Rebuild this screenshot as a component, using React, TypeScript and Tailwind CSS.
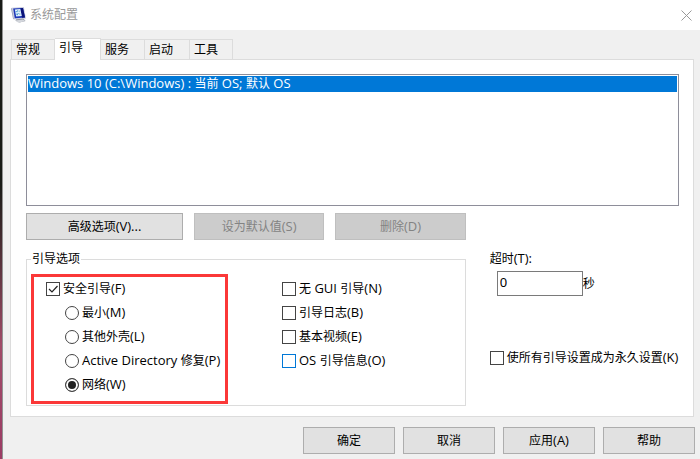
import { useState } from "react";
import type { ReactNode } from "react";

const tabs = [
  { label: "常规", width: "w-11" },
  { label: "引导", width: "w-[46px]" },
  { label: "服务", width: "w-11" },
  { label: "启动", width: "w-[45px]" },
  { label: "工具", width: "w-[43px]" },
];

const bootModes = ["最小(M)", "其他外壳(L)", "Active Directory 修复(P)", "网络(W)"];

// Latin runs are set one size larger than the Chinese text around them.
function Mixed({ text }: { text: string }) {
  return (
    <span className="whitespace-pre">
      {text.split(/([\x20-\x7e]+)/).map((run, i) =>
        i % 2 ? <span key={i} className="font-['Open_Sans',sans-serif] text-[13px] leading-none">{run}</span> : run,
      )}
    </span>
  );
}

function SystemIcon() {
  return (
    <svg width="16" height="16" viewBox="0 0 16 16" aria-hidden="true">
      <path d="M6 11h6l2.500 3-6 1.500-4-2z" fill="#8f949e" />
      <path d="M4 13.500l8-1 2.500 1.500-7 1.800z" fill="#d3d6dc" />
      <path d="M1 .8L12.800 0 15 11.500l-12 1z" fill="#c6c9dc" />
      <path d="M2.200 1.600L12 1l2 9.500-10.200.8z" fill="#1a35b8" />
      <path d="M9.500 1.200L12 1l2 9.500-3 .2z" fill="#0b1478" />
      <path d="M3.800 2.500l5.500-.4 1.500 6.900-5.600.4z" fill="#dff1fb" />
      <path d="M4.800 4.200l.9.900 1-1.700M5.300 7l1 .8 1-1.700" fill="none" stroke="#2a86c8" />
      <path d="M7.500 4.200h1.500M8 7h1.500" stroke="#7fb2d4" />
      <path d="M0 1.800l1-1 2 11.700-1-.7z" fill="#9ba3bf" />
    </svg>
  );
}

function Check({ label, checked = false, accent = false }: { label: string; checked?: boolean; accent?: boolean }) {
  const [on, setOn] = useState(checked);
  return (
    <label className="flex h-6 items-center gap-[3px] whitespace-nowrap">
      <span className="relative flex size-[14px] shrink-0">
        <input
          type="checkbox"
          checked={on}
          onChange={() => setOn(!on)}
          className={`size-[14px] appearance-none border bg-white ${accent ? "border-[#0078d7]" : "border-[#444444]"}`}
        />
        {on && (
          <svg className="pointer-events-none absolute inset-0" width="14" height="14" viewBox="0 0 14 14">
            <path d="M3 7l3 3 5.500-6" fill="none" stroke="#222" strokeWidth="1.200" />
          </svg>
        )}
      </span>
      <Mixed text={label} />
    </label>
  );
}

function PushButton({ children, className = "", disabled = false }: { children: ReactNode; className?: string; disabled?: boolean }) {
  return (
    <button
      type="button"
      disabled={disabled}
      className={`h-[27px] border text-center whitespace-nowrap ${
        disabled ? "border-[#bfbfbf] bg-[#cccccc] text-[#838383]" : "border-[#adadad] bg-[#e1e1e1]"
      } ${className}`}
    >
      {children}
    </button>
  );
}

export default function App() {
  const [mode, setMode] = useState(3);
  return (
    <div className="flex min-h-screen bg-[#f0f0f0] font-['Noto_Sans','Noto_Sans_CJK_SC',sans-serif] text-[12px] leading-4 text-black">
      <div className="w-[3px] shrink-0 border-r border-[#929292] bg-linear-to-b from-[#191b17] from-40% via-[#a04b68] via-75% to-[#9b3c65]" />
      <div className="flex min-w-0 flex-1 flex-col">
        <header className="flex h-[30px] items-center bg-white pr-2 pl-2">
          <SystemIcon />
          <h1 className="ml-[3px] flex-1 text-[#999999]">系统配置</h1>
          <button type="button" aria-label="关闭" className="flex size-3 items-center justify-center">
            <svg width="11" height="11" viewBox="0 0 11 11">
              <path d="M.5.5l10 10M10.500.5l-10 10" stroke="#999999" />
            </svg>
          </button>
        </header>

        <main className="flex flex-1 flex-col pt-2 pr-[6px] pl-[7px]">
          <div role="tablist" className="z-10 -mb-px flex h-[22px] items-end pl-px">
            {tabs.map((tab, i) => (
              <button
                key={tab.label}
                type="button"
                role="tab"
                aria-selected={i === 1}
                className={`border-t border-r border-[#dcdcdc] pl-1 text-left ${tab.width} ${
                  i === 1 ? "h-[22px] bg-white pb-[3px]" : "h-[21px] border-b bg-[#f0f0f0]"
                } ${i === 0 ? "border-l" : ""}`}
              >
                {tab.label}
              </button>
            ))}
          </div>

          <section className="flex-1 border border-[#dcdcdc] bg-white pt-[14px] pr-[14px] pb-[10px] pl-[15px]">
            <ul role="listbox" aria-label="引导项" className="h-[132px] border border-[#8e8e9a] p-px">
              <li role="option" aria-selected="true" className="h-4 bg-[#0078d7] text-white">
                <Mixed text="Windows 10 (C:\Windows) : 当前 OS; 默认 OS" />
              </li>
            </ul>

            <div className="grid grid-cols-[439fr_213fr]">
              <div>
                <div className="mt-[7px] flex gap-[11px]">
                  <PushButton className="flex-[157]"><Mixed text="高级选项(V)..." /></PushButton>
                  <PushButton className="flex-[130]" disabled><Mixed text="设为默认值(S)" /></PushButton>
                  <PushButton className="flex-[130]" disabled><Mixed text="删除(D)" /></PushButton>
                </div>
                <fieldset className="mt-[11px] flex border border-[#dcdcdc] pb-px pl-1">
                  <legend className="px-px">引导选项</legend>
                  <div className="mt-[7px] h-[130px] w-[197px] shrink-0 border-3 border-[#fb3838] pl-3">
                    <Check label="安全引导(F)" checked />
                    {bootModes.map((name, i) => (
                      <label key={name} className="flex h-6 items-center gap-[3px] pl-[19px] whitespace-nowrap">
                        <input
                          type="radio"
                          name="mode"
                          checked={mode === i}
                          onChange={() => setMode(i)}
                          className="size-[14px] shrink-0 appearance-none rounded-full border border-[#444444] bg-white checked:bg-[#222222] checked:shadow-[inset_0_0_0_2px_white]"
                        />
                        <Mixed text={name} />
                      </label>
                    ))}
                  </div>
                  <div className="mt-[10px] ml-[54px]">
                    <Check label="无 GUI 引导(N)" />
                    <Check label="引导日志(B)" />
                    <Check label="基本视频(E)" />
                    <Check label="OS 引导信息(O)" accent />
                  </div>
                </fieldset>
              </div>

              <div className="pt-[45px] pl-6">
                <label htmlFor="timeout" className="block"><Mixed text="超时(T):" /></label>
                <div className="mt-1 flex items-center pl-[7px]">
                  <input
                    id="timeout"
                    type="text"
                    defaultValue="0"
                    className="h-[25px] w-[86px] border border-[#7a7a7a] px-[2px] pb-1 text-[13px]"
                  />
                  <span>秒</span>
                </div>
                <div className="mt-[50px]">
                  <Check label="使所有引导设置成为永久设置(K)" />
                </div>
              </div>
            </div>
          </section>
        </main>

        <footer className="flex justify-end gap-2 pt-[10px] pr-[5px] pb-[6px]">
          {["确定", "取消", "应用(A)", "帮助"].map((name) => (
            <PushButton key={name} className="w-[92px]"><Mixed text={name} /></PushButton>
          ))}
        </footer>
      </div>
    </div>
  );
}
